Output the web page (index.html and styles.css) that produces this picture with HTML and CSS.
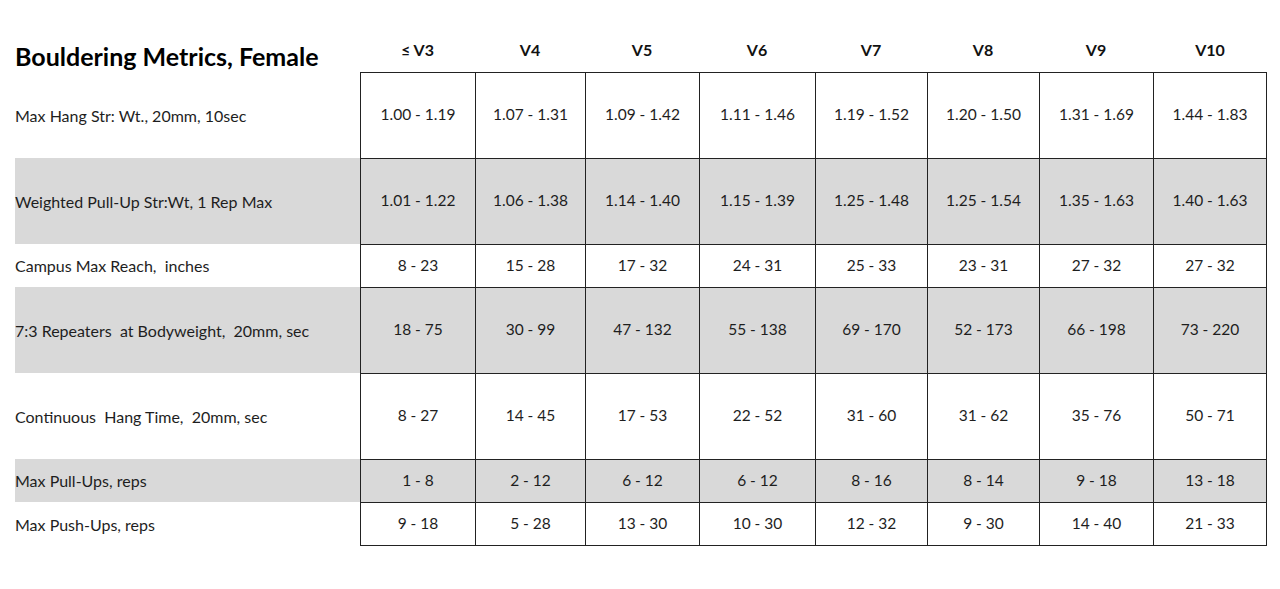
FILE: index.html
```html
<!DOCTYPE html>
<html>
<head>
<meta charset="utf-8">
<link rel="stylesheet" href="styles.css">
</head>
<body>
<div class="sheet">
  <div class="title">Bouldering Metrics, Female</div>
  <div class="hd">≤ V3</div><div class="hd">V4</div><div class="hd">V5</div><div class="hd">V6</div><div class="hd">V7</div><div class="hd">V8</div><div class="hd">V9</div><div class="hd">V10</div>

  <div class="lbl">Max Hang Str: Wt., 20mm, 10sec</div>
  <div class="c">1.00 - 1.19</div><div class="c">1.07 - 1.31</div><div class="c">1.09 - 1.42</div><div class="c">1.11 - 1.46</div><div class="c">1.19 - 1.52</div><div class="c">1.20 - 1.50</div><div class="c">1.31 - 1.69</div><div class="c last">1.44 - 1.83</div>

  <div class="lbl g">Weighted Pull-Up Str:Wt, 1 Rep Max</div>
  <div class="c g">1.01 - 1.22</div><div class="c g">1.06 - 1.38</div><div class="c g">1.14 - 1.40</div><div class="c g">1.15 - 1.39</div><div class="c g">1.25 - 1.48</div><div class="c g">1.25 - 1.54</div><div class="c g">1.35 - 1.63</div><div class="c g last">1.40 - 1.63</div>

  <div class="lbl">Campus Max Reach, &nbsp;inches</div>
  <div class="c">8 - 23</div><div class="c">15 - 28</div><div class="c">17 - 32</div><div class="c">24 - 31</div><div class="c">25 - 33</div><div class="c">23 - 31</div><div class="c">27 - 32</div><div class="c last">27 - 32</div>

  <div class="lbl g">7:3 Repeaters &nbsp;at Bodyweight, &nbsp;20mm, sec</div>
  <div class="c g">18 - 75</div><div class="c g">30 - 99</div><div class="c g">47 - 132</div><div class="c g">55 - 138</div><div class="c g">69 - 170</div><div class="c g">52 - 173</div><div class="c g">66 - 198</div><div class="c g last">73 - 220</div>

  <div class="lbl">Continuous &nbsp;Hang Time, &nbsp;20mm, sec</div>
  <div class="c">8 - 27</div><div class="c">14 - 45</div><div class="c">17 - 53</div><div class="c">22 - 52</div><div class="c">31 - 60</div><div class="c">31 - 62</div><div class="c">35 - 76</div><div class="c last">50 - 71</div>

  <div class="lbl g">Max Pull-Ups, reps</div>
  <div class="c g">1 - 8</div><div class="c g">2 - 12</div><div class="c g">6 - 12</div><div class="c g">6 - 12</div><div class="c g">8 - 16</div><div class="c g">8 - 14</div><div class="c g">9 - 18</div><div class="c g last">13 - 18</div>

  <div class="lbl">Max Push-Ups, reps</div>
  <div class="c bot">9 - 18</div><div class="c bot">5 - 28</div><div class="c bot">13 - 30</div><div class="c bot">10 - 30</div><div class="c bot">12 - 32</div><div class="c bot">9 - 30</div><div class="c bot">14 - 40</div><div class="c bot last">21 - 33</div>
</div>
</body>
</html>
```

FILE: styles.css
```css
html, body {
  margin: 0;
  padding: 0;
  background: #ffffff;
}
body {
  font-family: Lato, "Open Sans", "Liberation Sans", sans-serif;
  color: #1e1e1e;
}
.sheet {
  display: grid;
  grid-template-columns: 345px 115px 110px 114px 116px 112px 112px 114px 114px;
  grid-template-rows: 72px 86px 86px 43px 86px 86px 43px 44px;
  padding-left: 15px;
}
.title {
  font-size: 25px;
  font-weight: 700;
  color: #000;
  align-self: end;
  padding-bottom: 1px;
  white-space: nowrap;
}
.hd {
  font-size: 16px;
  font-weight: 700;
  color: #111;
  text-align: center;
  padding-top: 40px;
}
.lbl {
  font-size: 16px;
  display: flex;
  align-items: center;
  white-space: nowrap;
}
.c {
  font-size: 15.5px;
  display: flex;
  align-items: center;
  justify-content: center;
  border-left: 1px solid #222;
  border-top: 1px solid #222;
  padding-bottom: 3px;
}
.g {
  background: #d9d9d9;
}
.last {
  border-right: 1px solid #222;
}
.bot {
  border-bottom: 1px solid #222;
}
```
